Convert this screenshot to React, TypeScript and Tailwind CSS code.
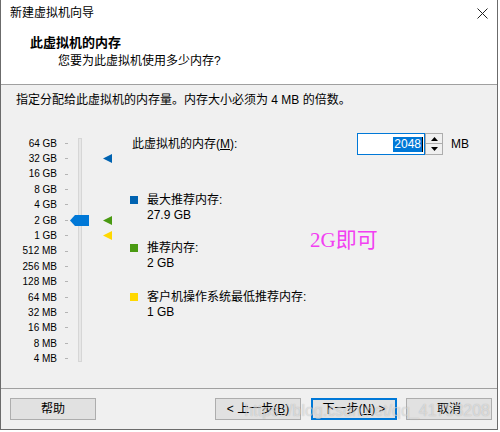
import React from "react";

const FONT = { fontFamily: '"Liberation Sans", "Noto Sans CJK SC", sans-serif' };

const rows = [
  "64 GB", "32 GB", "16 GB", "8 GB", "4 GB", "2 GB", "1 GB",
  "512 MB", "256 MB", "128 MB", "64 MB", "32 MB", "16 MB", "8 MB", "4 MB",
];

const markers: Record<number, string> = { 1: "#0063b1", 5: "#4a9a12", 6: "#ffd800" };

function Tri({ color }: { color: string }) {
  return (
    <svg width="9" height="9" viewBox="0 0 9 9">
      <polygon points="0,4.5 9,0 9,9" fill={color} />
    </svg>
  );
}

function Btn({ children, primary }: { children: React.ReactNode; primary?: boolean }) {
  return (
    <div
      className={
        "w-[86px] h-[22px] flex items-center justify-center bg-[#e1e1e1] text-[12px] text-black " +
        (primary ? "border-2 border-[#0078d7]" : "border border-[#adadad]")
      }
    >
      {children}
    </div>
  );
}

export default function App() {
  return (
    <div className="w-[500px] h-[432px] bg-white" style={FONT}>
      <div className="w-[498px] h-[430px] border-l border-r border-b border-[#6b6b6b] flex flex-col bg-[#f0f0f0] relative">
        {/* title bar */}
        <div className="h-[26px] bg-white flex items-center justify-between pl-[9px] pr-[9px]">
          <span className="text-[12px] leading-[16px] text-black">新建虚拟机向导</span>
          <svg width="11" height="11" viewBox="0 0 11 11">
            <path d="M0.5 0.5 L10.5 10.5 M10.5 0.5 L0.5 10.5" stroke="#222" strokeWidth="1" />
          </svg>
        </div>
        {/* header */}
        <div className="h-[59px] bg-white border-b border-[#a0a0a0] flex flex-col">
          <div className="pl-[29px] pt-[9px] text-[13px] leading-[16px] font-bold text-black">此虚拟机的内存</div>
          <div className="pl-[57px] pt-[2px] text-[12px] leading-[16px] text-black">您要为此虚拟机使用多少内存?</div>
        </div>
        {/* body */}
        <div className="flex-1 flex flex-col px-[15px] relative">
          <div className="pt-[7px] text-[12px] leading-[16px] text-black">
            指定分配给此虚拟机的内存量。内存大小必须为 4 MB 的倍数。
          </div>
          <div className="mt-[25px] flex">
            {/* slider widget */}
            <div className="relative flex w-[114px]">
              <div className="w-[41px] pt-[2.6px] flex flex-col text-right text-[10px] text-black">
                {rows.map((r) => (
                  <div key={r} className="h-[15.4px] leading-[15.4px] whitespace-nowrap">{r}</div>
                ))}
              </div>
              <div className="ml-[8px] w-[4px] pt-[2.6px] flex flex-col">
                {rows.map((r) => (
                  <div key={r} className="h-[15.4px] flex items-center">
                    <div className="w-[3px] h-[1px] bg-[#b4b4b4]" />
                  </div>
                ))}
              </div>
              <div className="ml-[9px] mt-[5px] w-[4px] h-[224px] bg-[#e7e7e7] border border-[#d6d6d6]" />
              <div className="ml-[21px] w-[9px] pt-[2.6px] flex flex-col">
                {rows.map((r, i) => (
                  <div key={r} className="h-[15.4px] flex items-center">
                    {markers[i] ? <Tri color={markers[i]} /> : null}
                  </div>
                ))}
              </div>
              <svg width="19" height="11" viewBox="0 0 19 11" className="absolute left-[54px] top-[82px]">
                <polygon points="0,5.5 5,0 19,0 19,11 5,11" fill="#0078d7" />
              </svg>
            </div>
            {/* right column */}
            <div className="flex-1 flex flex-col">
              <div className="h-[22px] flex items-center">
                <span className="pl-[2px] text-[12px] leading-[16px] text-black w-[227px]">
                  此虚拟机的内存(<span className="underline">M</span>):
                </span>
                <div className="w-[68px] h-[22px] border border-[#0078d7] bg-white flex items-center justify-end pr-[1px]">
                  <span className="bg-[#0078d7] text-white text-[12px] leading-[15px] px-[1px]">2048</span>
                  <div className="w-[1px] h-[15px] bg-black" />
                </div>
                <div className="w-[18px] h-[22px] flex flex-col">
                  <div className="h-[11px] border border-[#adadad] bg-[#f0f0f0] flex items-center justify-center">
                    <svg width="7" height="4" viewBox="0 0 7 4"><polygon points="3.5,0 7,4 0,4" fill="#000" /></svg>
                  </div>
                  <div className="h-[11px] border border-t-0 border-[#adadad] bg-[#f0f0f0] flex items-center justify-center">
                    <svg width="7" height="4" viewBox="0 0 7 4"><polygon points="0,0 7,0 3.5,4" fill="#000" /></svg>
                  </div>
                </div>
                <span className="ml-[8px] text-[12px] leading-[16px] text-black">MB</span>
              </div>
              <div className="mt-[37.5px] flex flex-col text-[12px] leading-[15px] text-black">
                <div className="flex">
                  <div className="w-[8px] h-[8px] mt-[3px] bg-[#0063b1]" />
                  <div className="ml-[9px] flex flex-col">
                    <span>最大推荐内存:</span>
                    <span>27.9 GB</span>
                  </div>
                </div>
                <div className="flex mt-[18px]">
                  <div className="w-[8px] h-[8px] mt-[3.5px] bg-[#4a9a12]" />
                  <div className="ml-[9px] flex flex-col">
                    <span>推荐内存:</span>
                    <span>2 GB</span>
                  </div>
                </div>
                <div className="flex mt-[19px]">
                  <div className="w-[8px] h-[8px] mt-[3.5px] bg-[#ffd800]" />
                  <div className="ml-[9px] flex flex-col">
                    <span>客户机操作系统最低推荐内存:</span>
                    <span>1 GB</span>
                  </div>
                </div>
              </div>
            </div>
          </div>
          <div
            className="absolute left-[309px] top-[143px] text-[21px] leading-[24px] text-[#f23ff2]"
            style={{ fontFamily: '"Liberation Serif", "Noto Sans CJK SC", serif' }}
          >
            2G即可
          </div>
        </div>
        {/* footer */}
        <div className="h-[41px] border-t border-[#a0a0a0] flex items-start pt-[9px] pl-[9px] relative">
          <Btn>帮助</Btn>
          <div className="ml-[119px]"><Btn>&lt; 上一步(<span className="underline">B</span>)</Btn></div>
          <div className="ml-[10px]"><Btn primary>下一步(<span className="underline">N</span>) &gt;</Btn></div>
          <div className="ml-[9px]"><Btn>取消</Btn></div>
          <div
            className="absolute right-[7px] top-[12px] text-[16px] leading-[20px] text-white/50 whitespace-nowrap [text-shadow:0_0_1px_rgba(0,0,0,0.25)]"
          >
            https://blog.csdn.net/qq_41753208
          </div>
        </div>
      </div>
    </div>
  );
}
